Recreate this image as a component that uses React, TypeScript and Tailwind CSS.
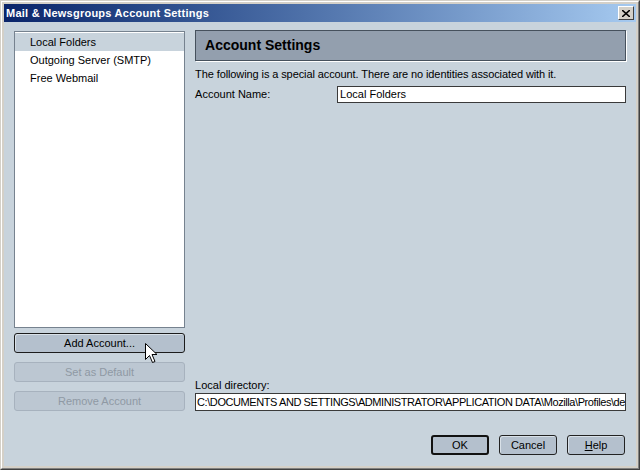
const font = { fontFamily: '"Liberation Sans", Arial, sans-serif' }

const accounts = ["Local Folders", "Outgoing Server (SMTP)", "Free Webmail"]

const SideButton = ({ label, disabled }: { label: string; disabled?: boolean }) => (
  <div
    className={
      disabled
        ? "flex h-[20px] w-full items-center justify-center rounded-[3px] border border-[#a7b2be] bg-[#bcc7d2] text-[11px] text-[#8f99a4]"
        : "flex h-[20px] w-full items-center justify-center rounded-[3px] border border-[#1c1c1c] bg-[#b4c0cd] text-[11px] text-black shadow-[inset_1px_1px_0_#d9e1e8]"
    }
  >
    {label}
  </div>
)

const DialogButton = ({ children, primary }: { children: React.ReactNode; primary?: boolean }) => (
  <div
    className={
      primary
        ? "flex h-[20px] w-[58px] items-center justify-center rounded-[3px] border-2 border-[#111] bg-[#b4c0cd] text-[11px] text-black"
        : "flex h-[20px] w-[58px] items-center justify-center rounded-[3px] border border-[#222] bg-[#b4c0cd] text-[11px] text-black shadow-[inset_1px_1px_0_#d9e1e8]"
    }
  >
    {children}
  </div>
)

const Cursor = () => (
  <svg width="13" height="21" viewBox="0 0 13 21" className="absolute left-[145px] top-[343px]">
    <path
      d="M0.5 0.5 L0.5 16.5 L4.5 12.5 L7.5 19.5 L10 18.5 L7 11.5 L12 11.5 Z"
      fill="#fff"
      stroke="#000"
      strokeWidth="1"
      strokeLinejoin="miter"
    />
  </svg>
)

export default function App() {
  return (
    <div className="relative h-[470px] w-[640px] overflow-hidden" style={font}>
      <div className="flex h-full w-full flex-col border border-[#d4d0c8] border-b-[#404040] border-r-[#404040]">
        <div className="flex h-full w-full flex-col border border-white border-b-[#808080] border-r-[#808080] bg-[#d4d0c8] p-[2px]">
          {/* title bar */}
          <div className="flex h-[18px] shrink-0 items-center justify-between bg-gradient-to-r from-[#0a246a] to-[#a6caf0] pl-[2px] pr-[2px]">
            <span className="text-[11px] font-bold tracking-[0.25px] text-white">
              Mail &amp; Newsgroups Account Settings
            </span>
            <div className="flex h-[14px] w-[16px] items-center justify-center border border-white border-b-[#404040] border-r-[#404040] bg-[#d4d0c8]">
              <svg width="8" height="7" viewBox="0 0 8 7">
                <path d="M0 0 L8 7 M8 0 L0 7" stroke="#000" strokeWidth="1.6" />
              </svg>
            </div>
          </div>

          {/* body */}
          <div className="flex flex-1 flex-col bg-[#c8d3dc] px-[10px] pt-[8px]">
            <div className="flex gap-[10px]">
              {/* left column */}
              <div className="flex w-[172px] flex-col pt-[1px]">
                <div className="h-[297px] border border-[#76828f] bg-white pt-[1px]">
                  {accounts.map((a, i) => (
                    <div
                      key={a}
                      className={
                        "flex h-[18px] items-center pl-[15px] text-[11px] text-black " +
                        (i === 0 ? "bg-[#c8d3dc]" : "")
                      }
                    >
                      {a}
                    </div>
                  ))}
                </div>
                <div className="mt-[5px] flex flex-col gap-[9px]">
                  <SideButton label="Add Account..." />
                  <SideButton label="Set as Default" disabled />
                  <SideButton label="Remove Account" disabled />
                </div>
              </div>

              {/* right column */}
              <div className="flex w-[431px] flex-col">
                <div className="flex h-[31px] items-center border border-[#46515d] bg-[#939fae] pl-[9px] shadow-[1px_1px_0_#fff]">
                  <span className="text-[14px] font-bold text-black">Account Settings</span>
                </div>
                <div className="mt-[5px] text-[11px] tracking-[-0.1px] text-black">
                  The following is a special account. There are no identities associated with it.
                </div>
                <div className="mt-[3px] flex items-center">
                  <span className="w-[142px] text-[11px] text-black">Account Name:</span>
                  <div className="flex h-[17px] flex-1 items-center border border-[#3a3a3a] bg-white pl-[2px] text-[11px] text-black">
                    Local Folders
                  </div>
                </div>
                <div className="h-[274px]" />
                <div className="text-[11px] text-black">Local directory:</div>
                <div className="flex h-[18px] items-center overflow-hidden whitespace-nowrap border border-[#3a3a3a] bg-white pl-[1px] text-[11px] tracking-[-0.42px] text-black">
                  C:\DOCUMENTS AND SETTINGS\ADMINISTRATOR\APPLICATION DATA\Mozilla\Profiles\de
                </div>
              </div>
            </div>

            <div className="mt-[24px] flex justify-end gap-[10px] pr-[1px]">
              <DialogButton primary>OK</DialogButton>
              <DialogButton>Cancel</DialogButton>
              <DialogButton>
                <span className="underline">H</span>elp
              </DialogButton>
            </div>
          </div>
        </div>
      </div>
      <Cursor />
    </div>
  )
}
